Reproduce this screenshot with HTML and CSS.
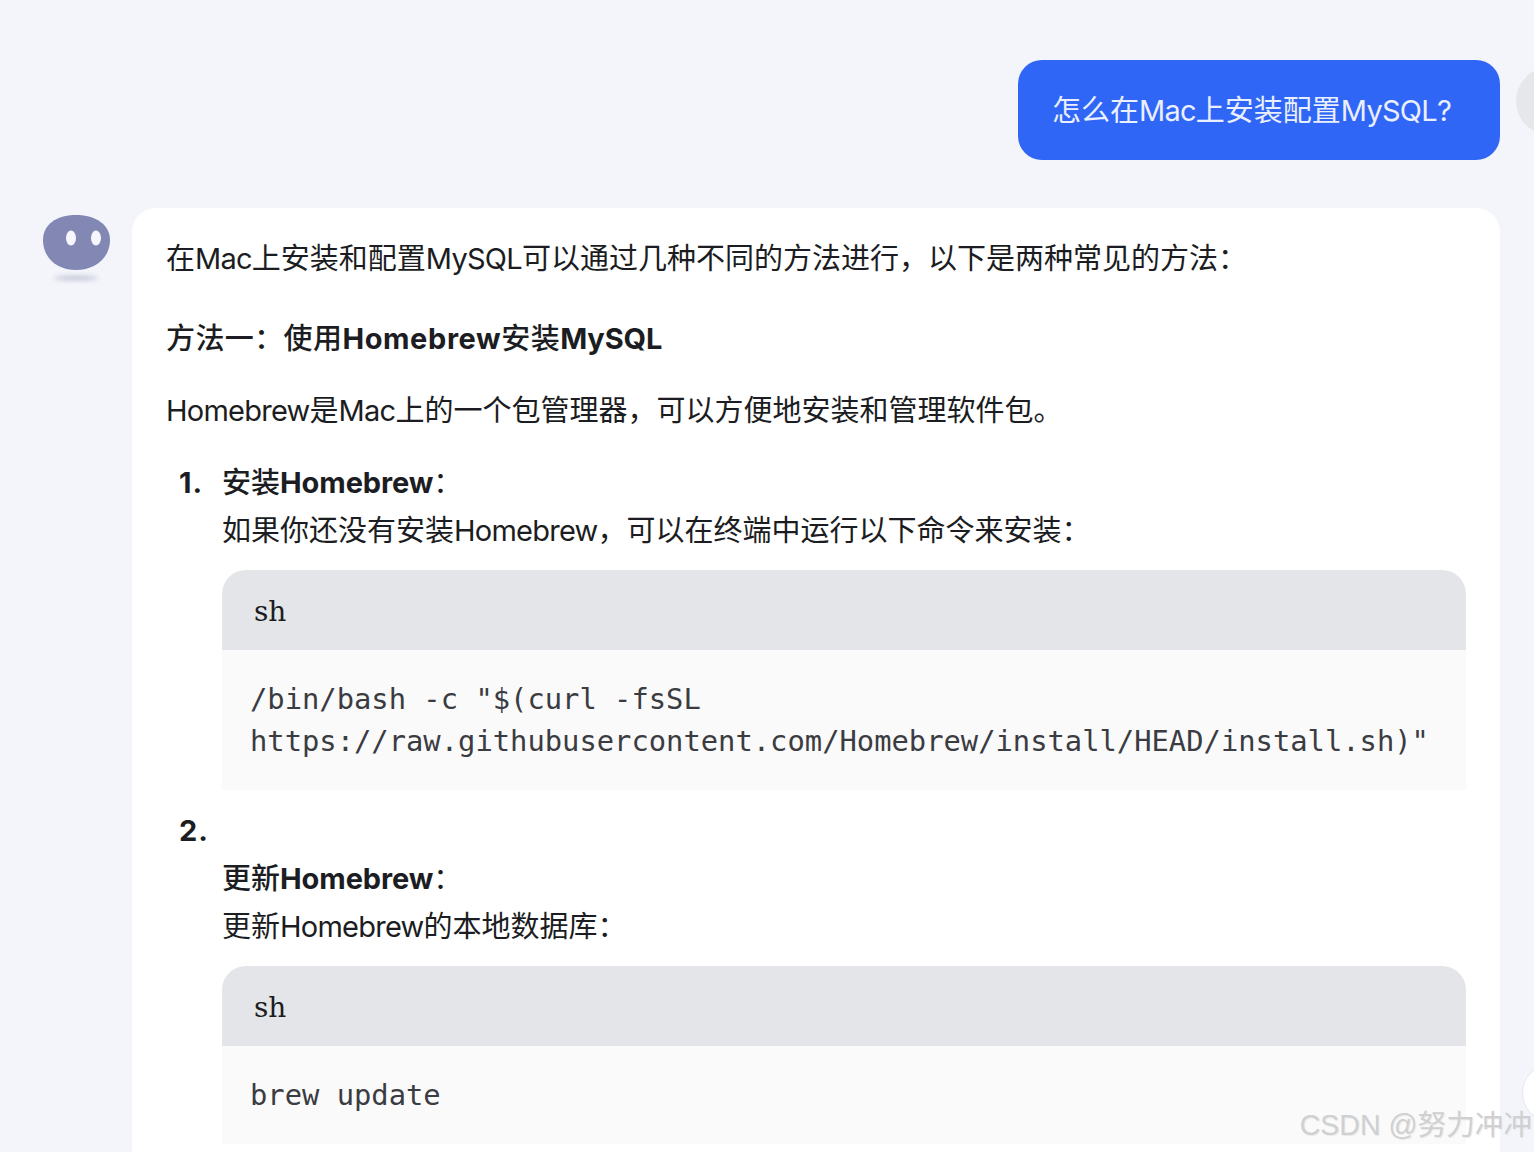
FILE: index.html
```html
<!DOCTYPE html>
<html lang="zh-CN">
<head>
  <meta charset="UTF-8">
  <meta name="viewport" content="width=device-width, initial-scale=1.0">
  <title>MySQL</title>
  <link rel="stylesheet" href="styles.css">
</head>
<body>
  <div class="chat">
    <div class="row row-user">
      <div class="bubble-user">怎么在<span class="en">Mac</span>上安装配置<span class="en">MySQL?</span></div>
      <div class="avatar-user"></div>
    </div>

    <div class="row row-bot">
      <svg class="avatar-bot" width="68" height="76" viewBox="0 0 68 76">
        <defs>
          <filter id="soft" x="-50%" y="-300%" width="200%" height="700%">
            <feGaussianBlur stdDeviation="2.4"></feGaussianBlur>
          </filter>
        </defs>
        <ellipse cx="34" cy="70" rx="22" ry="1.8" fill="#b4b5c6" filter="url(#soft)"></ellipse>
        <path d="M34 7C14 7 1 17 1 32C1 50 15 62 34 62C53 62 68 50 68 32C68 17 54 7 34 7Z" fill="#8288b3"></path>
        <ellipse cx="29" cy="30" rx="5" ry="7.5" fill="#f6f7fc"></ellipse>
        <ellipse cx="54" cy="30" rx="5" ry="7.5" fill="#f6f7fc"></ellipse>
      </svg>
      <div class="bubble-bot">
        <p>在<span class="en">Mac</span>上安装和配置<span class="en">MySQL</span>可以通过几种不同的方法进行，以下是两种常见的方法：</p>
        <h3>方法一：使用<b class="en-b en-wide">Homebrew</b>安装<b class="en-b">MySQL</b></h3>
        <p><span class="en">Homebrew</span>是<span class="en">Mac</span>上的一个包管理器，可以方便地安装和管理软件包。</p>
        <ol class="steps">
          <li>
            <span class="num">1.</span><strong class="term">安装<b class="en-b">Homebrew</b></strong>：<br>
            如果你还没有安装<span class="en">Homebrew</span>，可以在终端中运行以下命令来安装：
            <div class="code">
              <div class="code-lang">sh</div>
              <pre class="code-body">/bin/bash -c "$(curl -fsSL
https://raw.githubusercontent.com/Homebrew/install/HEAD/install.sh)"</pre>
            </div>
          </li>
          <li>
            <span class="num num-alone">2.</span>
            <strong class="term">更新<b class="en-b">Homebrew</b></strong>：<br>
            更新<span class="en">Homebrew</span>的本地数据库：
            <div class="code">
              <div class="code-lang">sh</div>
              <pre class="code-body">brew update</pre>
            </div>
          </li>
        </ol>
      </div>
    </div>
  </div>

  <div class="scroll-btn"></div>
  <div class="watermark">CSDN @努力冲冲</div>
</body>
</html>
```

FILE: styles.css
```css
*{
  margin: 0;
  padding: 0;
  box-sizing: border-box;
}
html, body{
  height: 1152px;
  overflow: hidden;
}
body{
  background-color: #f3f5fb;
  color: #1b1d22;
  font-family: Inter, "Noto Sans CJK SC", sans-serif;
  font-size: 29px;
  line-height: 48px;
}
/* latin runs sit a little tighter than the CJK around them */
.en{
  letter-spacing: -0.75px;
}
.en-b{
  font-weight: 700;
  letter-spacing: -0.1px;
}
.en-wide{
  letter-spacing: 0.6px;
}
.chat{
  padding: 60px 34px 0 42px;
}
.row{
  display: flex;
}
.row-user{
  justify-content: flex-end;
  margin-bottom: 48px;
}
.bubble-user{
  background-color: #3066f5;
  color: #e9efff;
  height: 100px;
  width: 482px;
  padding: 27px 34px;
  border-radius: 24px;
  white-space: nowrap;
}
.avatar-user{
  flex: none;
  width: 68px;
  height: 68px;
  margin: 7px -84px 0 16px;
  border-radius: 50%;
  background-color: #e6e7eb;
}
.row-bot{
  gap: 22px;
}
.avatar-bot{
  flex: none;
}
.bubble-bot{
  flex: 1;
  min-width: 0;
  height: 960px;
  padding: 27px 34px;
  background-color: #fff;
  border-radius: 24px 24px 0 0;
}
.bubble-bot h3{
  font-size: 29px;
  font-weight: 500;
  letter-spacing: 0.4px;
  margin: 32px 0 24px;
}
.term{
  font-weight: 500;
}
.steps{
  list-style: none;
  margin-top: 24px;
  padding-left: 56px;
}
.num{
  display: inline-block;
  width: 43px;
  margin-left: -43px;
  font-weight: 700;
  letter-spacing: 1px;
}
.num-alone{
  display: block;
}
.code{
  margin: 15px 0 17px;
  border-radius: 24px 24px 0 0;
  overflow: hidden;
}
.code-lang{
  height: 80px;
  padding: 18px 32px;
  background-color: #e3e5e8;
  font-family: "DejaVu Serif", serif;
  font-size: 28px;
  line-height: 48px;
}
.code-body{
  padding: 28px;
  background-color: #fafafa;
  color: #3a3c42;
  font-family: "DejaVu Sans Mono", monospace;
  font-size: 28.8px;
  line-height: 42px;
  white-space: pre;
}
.scroll-btn{
  position: absolute;
  left: 1522px;
  top: 1064px;
  width: 58px;
  height: 58px;
  border: 1px solid #e7e8ec;
  border-radius: 50%;
  background-color: #fff;
}
.watermark{
  position: absolute;
  right: 2px;
  top: 1104px;
  color: #cfd0d2;
  font-family: "Liberation Sans", "Noto Sans CJK SC", sans-serif;
  font-size: 28.6px;
  line-height: 42px;
  white-space: nowrap;
  text-shadow: 1px 1px 1px #e9e9e9;
}
```
